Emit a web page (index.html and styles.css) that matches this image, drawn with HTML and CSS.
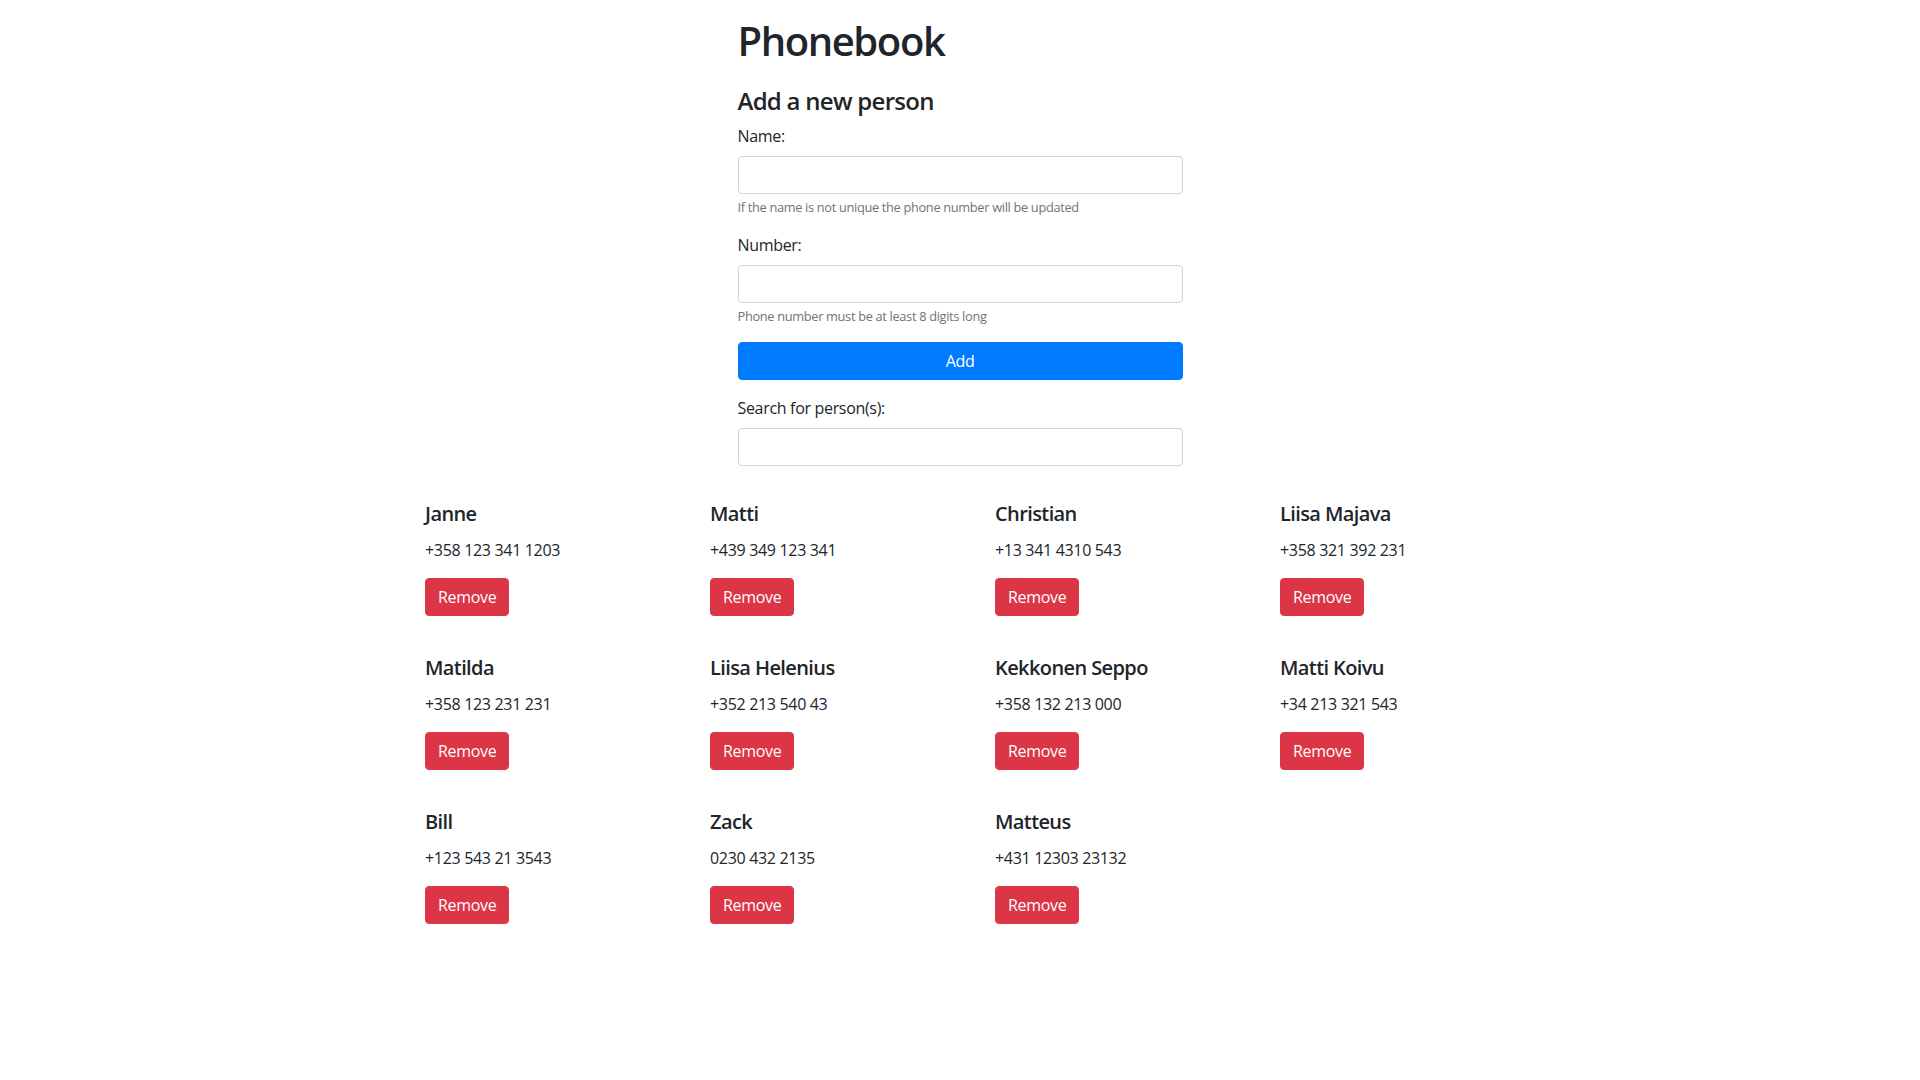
FILE: index.html
```html
<!DOCTYPE html>
<html lang="en">
<head>
<meta charset="utf-8">
<title>Phonebook</title>
<link rel="stylesheet" href="styles.css">
</head>
<body>
<div class="container">
  <div class="form-col">
    <h1 class="title">Phonebook</h1>
    <h4 class="subtitle">Add a new person</h4>
    <form class="person-form">
      <div class="form-group">
        <label class="label">Name:</label>
        <input class="form-control" type="text">
        <small class="form-text">If the name is not unique the phone number will be updated</small>
      </div>
      <div class="form-group">
        <label class="label">Number:</label>
        <input class="form-control" type="text">
        <small class="form-text">Phone number must be at least 8 digits long</small>
      </div>
      <div class="form-group">
        <button type="button" class="btn btn-primary btn-block">Add</button>
      </div>
      <div class="form-group">
        <label class="label">Search for person(s):</label>
        <input class="form-control" type="text">
      </div>
    </form>
  </div>
  <div class="people">
    <div class="card"><h5 class="card-title">Janne</h5><p class="card-text">+358 123 341 1203</p><button class="btn btn-danger">Remove</button></div>
    <div class="card"><h5 class="card-title">Matti</h5><p class="card-text">+439 349 123 341</p><button class="btn btn-danger">Remove</button></div>
    <div class="card"><h5 class="card-title">Christian</h5><p class="card-text">+13 341 4310 543</p><button class="btn btn-danger">Remove</button></div>
    <div class="card"><h5 class="card-title">Liisa Majava</h5><p class="card-text">+358 321 392 231</p><button class="btn btn-danger">Remove</button></div>
    <div class="card"><h5 class="card-title">Matilda</h5><p class="card-text">+358 123 231 231</p><button class="btn btn-danger">Remove</button></div>
    <div class="card"><h5 class="card-title">Liisa Helenius</h5><p class="card-text">+352 213 540 43</p><button class="btn btn-danger">Remove</button></div>
    <div class="card"><h5 class="card-title">Kekkonen Seppo</h5><p class="card-text">+358 132 213 000</p><button class="btn btn-danger">Remove</button></div>
    <div class="card"><h5 class="card-title">Matti Koivu</h5><p class="card-text">+34 213 321 543</p><button class="btn btn-danger">Remove</button></div>
    <div class="card"><h5 class="card-title">Bill</h5><p class="card-text">+123 543 21 3543</p><button class="btn btn-danger">Remove</button></div>
    <div class="card"><h5 class="card-title">Zack</h5><p class="card-text">0230 432 2135</p><button class="btn btn-danger">Remove</button></div>
    <div class="card"><h5 class="card-title">Matteus</h5><p class="card-text">+431 12303 23132</p><button class="btn btn-danger">Remove</button></div>
  </div>
</div>
</body>
</html>
```
FILE: styles.css
```css
* { box-sizing: border-box; }
html, body { margin: 0; padding: 0; background: #fff; }
body {
  font-family: "Open Sans", "Noto Sans", "Liberation Sans", sans-serif;
  font-size: 16px;
  line-height: 1.5;
  letter-spacing: -0.02em;
  color: #212529;
}
.container {
  width: 1140px;
  margin: 0 auto;
  padding-top: 17px;
}
.form-col {
  width: 445px;
  margin: 0 auto;
}
.title {
  margin: 0 0 22px;
  font-size: 40px;
  line-height: 48px;
  font-weight: 600;
  letter-spacing: -0.035em;
}
.subtitle {
  margin: 0 0 8px;
  font-size: 24px;
  line-height: 28.8px;
  font-weight: 600;
  letter-spacing: -0.03em;
}
.person-form { margin: 0; }
.form-group { margin-bottom: 16px; }
.label {
  display: block;
  margin-bottom: 8px;
  line-height: 24px;
}
.form-control {
  display: block;
  width: 100%;
  height: 38px;
  padding: 6px 12px;
  font: inherit;
  color: #495057;
  background: #fff;
  border: 1px solid #ced4da;
  border-radius: 4px;
  margin: 0;
}
.form-text {
  display: block;
  margin-top: 4px;
  font-size: 12.8px;
  line-height: 19.2px;
  color: #6c757d;
}
.btn {
  display: inline-block;
  font: inherit;
  font-size: 16px;
  line-height: 24px;
  letter-spacing: -0.02em;
  padding: 6px 12px;
  border: 1px solid transparent;
  border-radius: 4px;
  color: #fff;
  cursor: pointer;
  margin: 0;
}
.btn-primary { background: #007bff; border-color: #007bff; }
.btn-danger { background: #dc3545; border-color: #dc3545; }
.btn-block { display: block; width: 100%; }
.people {
  display: grid;
  grid-template-columns: repeat(4, 1fr);
  margin-top: 1px;
}
.card {
  padding: 20px 20px 20px 35px;
}
.card-title {
  margin: 0 0 12px;
  font-size: 20px;
  line-height: 24px;
  font-weight: 600;
  letter-spacing: -0.03em;
}
.card-text {
  margin: 0 0 16px;
  line-height: 24px;
}
```
